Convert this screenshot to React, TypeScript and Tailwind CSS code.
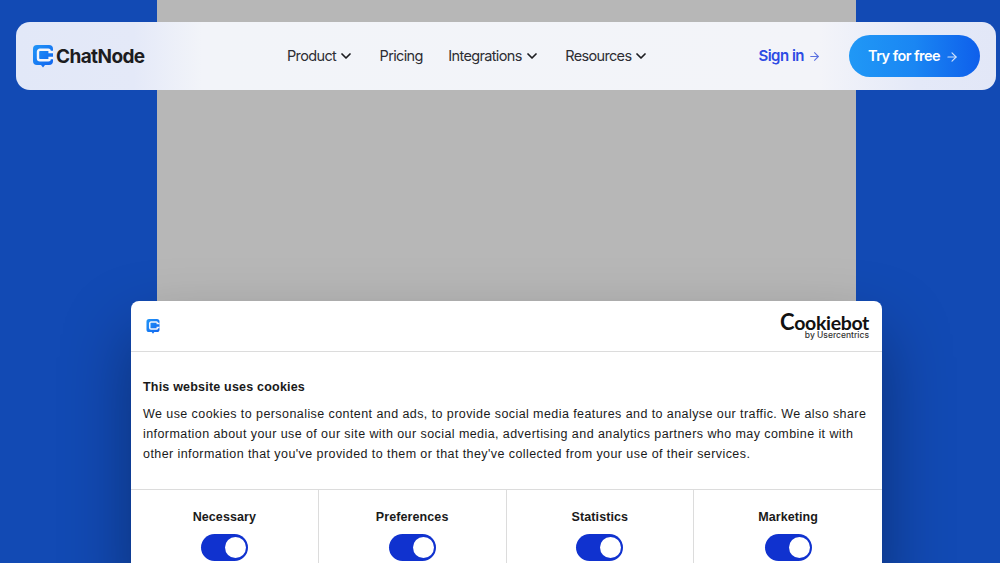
import { ChevronDown, ArrowRight } from "lucide-react";

const navItems = [
  { label: "Product", menu: true },
  { label: "Pricing", menu: false },
  { label: "Integrations", menu: true },
  { label: "Resources", menu: true },
];

const categories = ["Necessary", "Preferences", "Statistics", "Marketing"];

function LogoMark({ className }: { className: string }) {
  return (
    <svg viewBox="0 0 20 23" className={className}>
      <defs>
        <linearGradient id="mark" x1="0" y1="0" x2="1" y2="1">
          <stop offset="0" stopColor="#2196f8" />
          <stop offset="1" stopColor="#0f62ee" />
        </linearGradient>
      </defs>
      <path
        fill="url(#mark)"
        d="M4 0h12a4 4 0 0 1 4 4v12a4 4 0 0 1-4 4h-4l-2 2.6L8 20H4a4 4 0 0 1-4-4V4a4 4 0 0 1 4-4z"
      />
      <path
        fill="none"
        stroke="#f3f5fb"
        strokeWidth="2.4"
        d="M20 7h-3.4V6a1.3 1.3 0 0 0-1.3-1.3H7a2 2 0 0 0-2 2v6.6a2 2 0 0 0 2 2h8.3a1.3 1.3 0 0 0 1.3-1.3v-1H20"
      />
    </svg>
  );
}

function Toggle() {
  return (
    <div className="flex h-[27px] w-[47px] items-center justify-end rounded-full bg-[#1032cf] pr-[2px]">
      <div className="h-[21px] w-[21px] rounded-full bg-white" />
    </div>
  );
}

export default function App() {
  return (
    <div className="relative flex h-[563px] w-[1000px] justify-center overflow-hidden bg-[#124ab4] font-['Liberation_Sans',sans-serif]">
      <div className="ml-[13px] h-full w-[699px] bg-[#b7b7b7]" />

      {/* top nav */}
      <header className="absolute left-[16px] top-[22px] flex h-[68px] w-[980px] items-center rounded-[14px] bg-[linear-gradient(90deg,#e2e8f8_0%,#e4e9f8_12%,#f2f4f9_19%,#f3f4f9_82%,#e4e9f8_92%,#e2e7f7_100%)] pl-[17px] pr-[16px] font-['Inter',sans-serif]">
        <div className="flex w-[254px] items-center gap-[3px]">
          <LogoMark className="h-[23px] w-[20px]" />
          <span className="text-[19px] font-bold leading-none tracking-[-0.6px] text-[#1c1c20]">ChatNode</span>
        </div>
        <nav className="flex items-center gap-[25.5px] text-[14.5px] tracking-[-0.65px] text-[#2d2d33]">
          {navItems.map((item) => (
            <div key={item.label} className="flex items-center gap-[2px]">
              <span>{item.label}</span>
              {item.menu && <ChevronDown size={16} strokeWidth={2.6} className="text-[#1c1c20]" />}
            </div>
          ))}
        </nav>
        <div className="ml-auto flex items-center gap-[28px]">
          <div className="flex items-center gap-[4px] text-[15px] font-semibold tracking-[-0.5px] text-[#2c4be4]">
            <span>Sign in</span>
            <ArrowRight size={13} className="text-[#5a70e0]" />
          </div>
          <div className="flex h-[42px] w-[131px] items-center justify-center gap-[5px] rounded-full bg-[linear-gradient(90deg,#2098f6,#1a86f3_50%,#0e5feb)] pr-[2px] text-[14.5px] font-semibold tracking-[-0.55px] text-white">
            <span>Try for free</span>
            <ArrowRight size={14} className="mt-px opacity-80" />
          </div>
        </div>
      </header>

      {/* cookie dialog */}
      <section className="absolute left-[131px] top-[301px] w-[751px] rounded-t-[8px] bg-white text-[#1a1a1a] shadow-[0_32px_68px_rgba(0,0,0,0.35)]">
        <div className="flex h-[51px] items-center justify-between border-b border-[#dcdcdc] pl-[15px] pr-[13px]">
          <LogoMark className="h-[15px] w-[14px]" />
          <div className="flex flex-col items-end">
            <span className="font-['Lato',sans-serif] text-[19.5px] font-bold leading-[17px] tracking-[-0.35px] text-[#111]">
              <span className="text-[22px]">C</span>ookiebot
            </span>
            <span className="font-['Inter',sans-serif] text-[8.5px] font-medium leading-[9px] text-[#333]">by Usercentrics</span>
          </div>
        </div>
        <div className="h-[137px] px-[12px] pt-[25px] text-[12.5px] leading-[20px] tracking-[0.425px]">
          <h2 className="mb-[7px] font-bold tracking-[0.2px]">This website uses cookies</h2>
          <p className="whitespace-nowrap">
            We use cookies to personalise content and ads, to provide social media features and to analyse our traffic. We also share
            <br />
            information about your use of our site with our social media, advertising and analytics partners who may combine it with
            <br />
            other information that you've provided to them or that they've collected from your use of their services.
          </p>
        </div>
        <div className="grid h-[100px] grid-cols-4 border-t border-[#dcdcdc]">
          {categories.map((name, i) => (
            <div key={name} className={`flex flex-col items-center gap-[7px] pt-[17px] ${i < 3 ? "border-r border-[#dcdcdc]" : ""}`}>
              <span className="text-[12.5px] font-bold leading-[20px] tracking-[0.1px]">{name}</span>
              <Toggle />
            </div>
          ))}
        </div>
      </section>
    </div>
  );
}
